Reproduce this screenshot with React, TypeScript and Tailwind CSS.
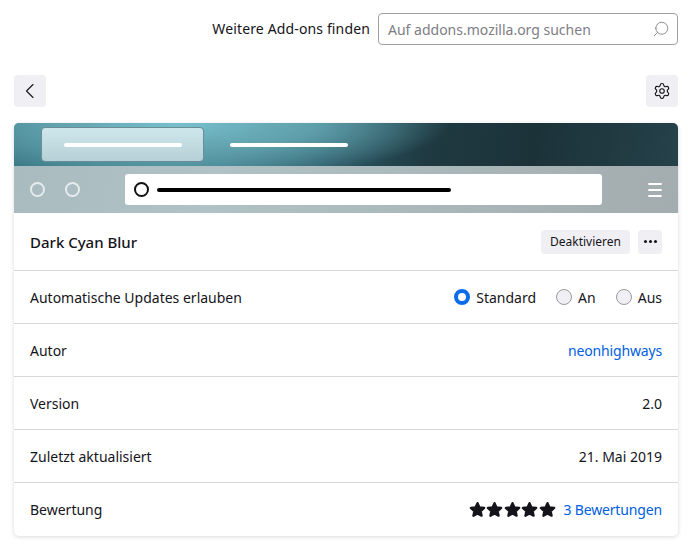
import { Settings, Search } from "lucide-react";

function Row({ label, children, last }: { label: string; children: React.ReactNode; last?: boolean }) {
  return (
    <div className={`flex h-[53px] items-center justify-between px-4 ${last ? "" : "border-b border-[#d7d7db]"}`}>
      <span>{label}</span>
      {children}
    </div>
  );
}

function Radio({ label, checked }: { label: string; checked?: boolean }) {
  return (
    <div className="flex items-center gap-[6px]">
      {checked ? (
        <span className="h-4 w-4 rounded-full border-[4px] border-[#0a6ce8] bg-white" />
      ) : (
        <span className="h-4 w-4 rounded-full border border-[#9a9a9f] bg-[#f0f0f4]" />
      )}
      <span>{label}</span>
    </div>
  );
}

function Star() {
  return (
    <svg width="17" height="17" viewBox="0 0 24 24" className="mr-[0.5px] text-[#15141a]">
      <path
        fill="currentColor"
        stroke="currentColor"
        strokeWidth="3.2"
        strokeLinejoin="round"
        d="M12 3l2.8 6 6.6.8-4.9 4.5 1.3 6.5-5.8-3.3-5.8 3.3 1.3-6.5-4.9-4.5 6.6-.8z"
      />
    </svg>
  );
}

export default function App() {
  return (
    <div className="h-[557px] w-[696px] overflow-hidden bg-white pl-[14px] pr-[18px] text-[14px] text-[#15141a] font-['Noto_Sans','Open_Sans',sans-serif]">
      <div className="flex h-[75px] items-start justify-end gap-2 pt-[13px]">
        <span className="leading-[32px] tracking-[0.14px]">Weitere Add-ons finden</span>
        <div className="flex h-[32px] w-[300px] items-center justify-between rounded-[4px] border border-[#a0a0a4] pl-[9px] pr-[7px]">
          <span className="text-[#7d7d85]">Auf addons.mozilla.org suchen</span>
          <Search size={18} strokeWidth={1} className="-scale-x-100 text-[#6e6e74]" />
        </div>
      </div>

      <div className="flex h-[48px] items-start justify-between">
        <button className="flex h-8 w-8 items-center justify-center rounded-[4px] bg-[#f0f0f4]">
          <svg width="16" height="16" viewBox="0 0 16 16" fill="none" stroke="#15141a" strokeWidth="1.1" strokeLinecap="round" strokeLinejoin="round">
            <path d="M11 1.5 4.5 8l6.5 6.5" />
          </svg>
        </button>
        <button className="flex h-8 w-8 items-center justify-center rounded-[4px] bg-[#f0f0f4]">
          <Settings size={18} strokeWidth={1.5} />
        </button>
      </div>

      <div className="w-[664px] overflow-hidden rounded-[5px] bg-white shadow-[0_1px_4px_rgba(0,0,0,0.15)]">
        <div className="flex h-[43px] items-center bg-[radial-gradient(ellipse_270px_58px_at_165px_0px,#76c0cc_0%,#5f9fab_50%,rgba(70,130,142,0)_100%),linear-gradient(100deg,#397583_0%,#478a98_26%,#2e5f6c_46%,#1f3a42_62%,#1c3239_78%,#25414a_100%)] pl-[27px]">
          <div className="flex h-[35px] w-[163px] items-center justify-center rounded-[4px] border border-[#6a8d97] bg-[linear-gradient(180deg,#cfe7ec,#b5d0d6)]">
            <span className="h-1 w-[118px] rounded-full bg-white" />
          </div>
          <span className="ml-[26px] h-1 w-[118px] rounded-full bg-white" />
        </div>

        <div className="flex h-[47px] items-center bg-[linear-gradient(100deg,#aabbc0_0%,#b0c2c5_30%,#a3acae_100%)] pl-4 pr-[15px]">
          <span className="h-[15px] w-[15px] rounded-full border-2 border-[#e6ecee]" />
          <span className="ml-5 h-[15px] w-[15px] rounded-full border-2 border-[#e6ecee]" />
          <div className="ml-[45px] flex h-[31px] w-[477px] items-center rounded-[3px] bg-white pl-[9px]">
            <span className="h-[15px] w-[15px] rounded-full border-2 border-[#111]" />
            <span className="ml-[8px] h-1 w-[294px] rounded-full bg-black" />
          </div>
          <svg width="16" height="16" viewBox="0 0 16 16" className="ml-auto" stroke="#ffffff" strokeWidth="1.8" strokeLinecap="round">
            <path d="M2 2h12M2 8h12M2 14h12" />
          </svg>
        </div>

        <div className="flex h-[58px] items-center justify-between border-b border-[#d7d7db] pl-4 pr-4">
          <span className="pt-[2px] text-[15px] font-[550]">Dark Cyan Blur</span>
          <div className="flex items-center gap-2">
            <button className="flex h-6 w-[89px] items-center justify-center rounded-[4px] bg-[#f0f0f4] text-[12px]">
              Deaktivieren
            </button>
            <button className="flex h-6 w-6 items-center justify-center gap-[2px] rounded-[4px] bg-[#f0f0f4]">
              <span className="h-[3px] w-[3px] rounded-full bg-[#15141a]" />
              <span className="h-[3px] w-[3px] rounded-full bg-[#15141a]" />
              <span className="h-[3px] w-[3px] rounded-full bg-[#15141a]" />
            </button>
          </div>
        </div>

        <Row label="Automatische Updates erlauben">
          <div className="flex items-center gap-5">
            <Radio label="Standard" checked />
            <Radio label="An" />
            <Radio label="Aus" />
          </div>
        </Row>
        <Row label="Autor">
          <span className="tracking-[-0.15px] text-[#0060df]">neonhighways</span>
        </Row>
        <Row label="Version">
          <span>2.0</span>
        </Row>
        <Row label="Zuletzt aktualisiert">
          <span>21. Mai 2019</span>
        </Row>
        <Row label="Bewertung" last>
          <div className="flex items-center">
            <div className="flex items-center">
              <Star /><Star /><Star /><Star /><Star />
            </div>
            <span className="ml-[7px] tracking-[-0.15px] text-[#0060df]">3 Bewertungen</span>
          </div>
        </Row>
      </div>
    </div>
  );
}
